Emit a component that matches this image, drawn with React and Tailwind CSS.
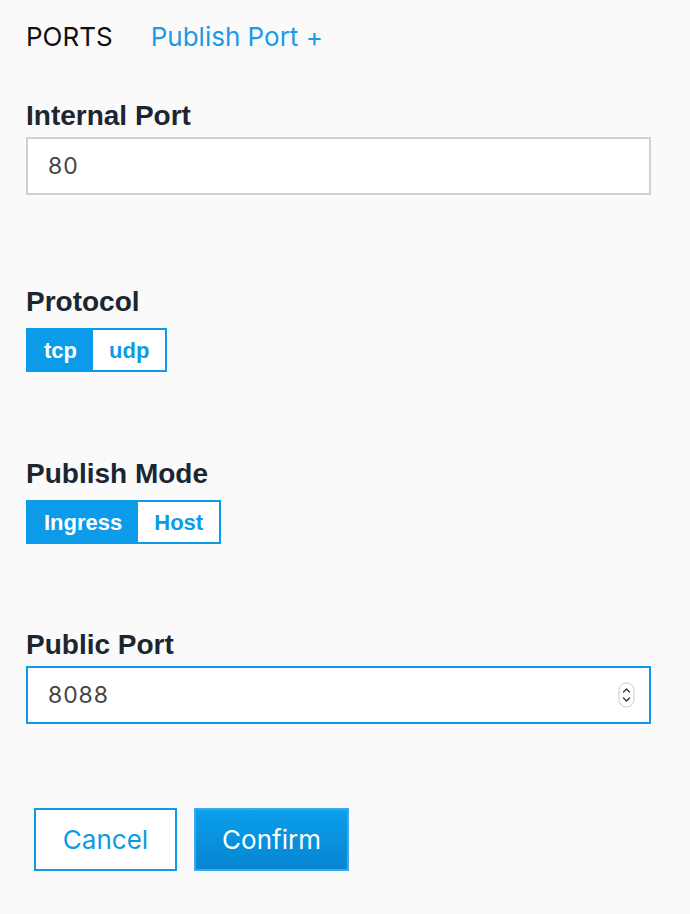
import React, { useState } from 'react';

const BLUE = 'text-[#0b9be8]';

const Label = ({ children, className = '' }) => (
  <div className={`text-[28px] leading-8 font-bold text-[#1b2631] ${className}`}>
    {children}
  </div>
);

const Toggle = ({ options, value, onChange }) => (
  <div className="inline-flex h-[44px] border-2 border-[#0b9be8] bg-white">
    {options.map((opt) => {
      const active = opt === value;
      return (
        <button
          key={opt}
          onClick={() => onChange(opt)}
          className={`flex items-center px-4 pt-[2px] text-[22px] font-bold leading-none ${
            active ? 'bg-[#0b9be8] text-white' : 'bg-white text-[#0b9be8]'
          }`}
        >
          {opt}
        </button>
      );
    })}
  </div>
);

const Spinner = () => (
  <svg width="17" height="26" viewBox="0 0 17 26" className="mr-[14px]">
    <rect x="1" y="1" width="15" height="24" rx="7.5" fill="#fff" stroke="#c9c9c9" />
    <path d="M5.5 10 L8.5 7 L11.5 10" fill="none" stroke="#333" strokeWidth="1.4" strokeLinecap="round" strokeLinejoin="round" />
    <path d="M5.5 16 L8.5 19 L11.5 16" fill="none" stroke="#333" strokeWidth="1.4" strokeLinecap="round" strokeLinejoin="round" />
  </svg>
);

const App = () => {
  const [protocol, setProtocol] = useState('tcp');
  const [mode, setMode] = useState('Ingress');

  return (
    <div
      className="min-h-screen w-[690px] bg-[#fafafa] px-[26px] pt-[21px]"
      style={{ fontFamily: '"Liberation Sans", Arial, sans-serif' }}
    >
      {/* Header */}
      <div className="flex items-center gap-[38px] text-[26px] leading-8 font-[Inter,sans-serif]">
        <span className="text-[#111]">PORTS</span>
        <span className="text-[#1a9be6]">Publish Port +</span>
      </div>

      {/* Internal Port */}
      <Label className="mt-[47px]">Internal Port</Label>
      <div className="mt-[5px] flex h-[58px] w-[625px] items-center border-2 border-[#cdd3d2] bg-white pl-[20px] text-[23px] tracking-[0.04em] text-[#444] font-[Inter,sans-serif]">
        80
      </div>

      {/* Protocol */}
      <Label className="mt-[91px]">Protocol</Label>
      <div className="mt-[10px]">
        <Toggle options={['tcp', 'udp']} value={protocol} onChange={setProtocol} />
      </div>

      {/* Publish Mode */}
      <Label className="mt-[86px]">Publish Mode</Label>
      <div className="mt-[10px]">
        <Toggle options={['Ingress', 'Host']} value={mode} onChange={setMode} />
      </div>

      {/* Public Port */}
      <Label className="mt-[85px]">Public Port</Label>
      <div className="mt-[5px] flex h-[58px] w-[625px] items-center justify-between border-2 border-[#0b9be8] bg-white pl-[20px] text-[23px] tracking-[0.04em] text-[#444] font-[Inter,sans-serif]">
        <span>8088</span>
        <Spinner />
      </div>

      {/* Actions */}
      <div className="ml-2 mt-[84px] flex gap-[17px] font-[Inter,sans-serif] text-[26px]">
        <button className={`h-[63px] w-[143px] border-2 border-[#0b9be8] bg-white ${BLUE}`}>
          Cancel
        </button>
        <button className="h-[63px] w-[155px] border-2 border-[#3aa8ec] bg-gradient-to-b from-[#0b9eea] to-[#0786d2] text-white">
          Confirm
        </button>
      </div>
    </div>
  );
};

export default App;
